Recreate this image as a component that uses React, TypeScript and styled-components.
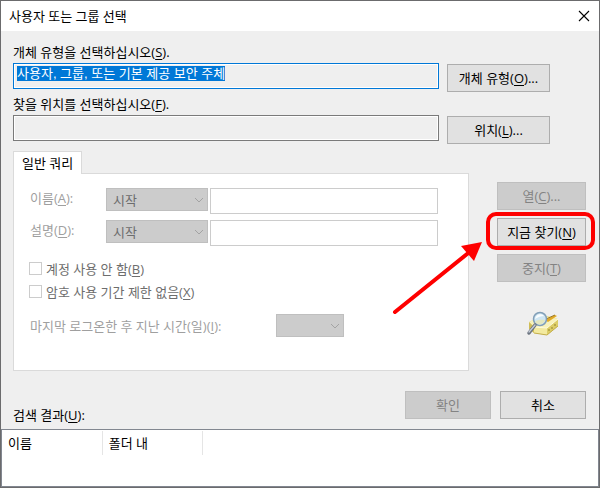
import React, { useEffect, useRef } from "react";
import styled, { createGlobalStyle, css } from "styled-components";

const GlobalStyle = createGlobalStyle`
  *, *::before, *::after { box-sizing: border-box; }
  body { margin: 0; background: #efefef; }
  body, button, input, select, textarea {
    font-family: "Open Sans", "Noto Sans CJK KR", sans-serif;
    font-size: 13px;
    line-height: 20px;
    color: #000;
  }
  u { text-underline-offset: 2px; }
`;

const Dialog = styled.main`
  display: flex;
  flex-direction: column;
  min-height: 100vh;
  border: 1px solid #6b6b6d;
  background: #efefef;
`;

const TitleBar = styled.header`
  display: flex;
  align-items: center;
  justify-content: space-between;
  height: 30px;
  padding: 0 8px;
  background: #fff;
`;

const Title = styled.h1`
  margin: 0;
  font-size: 13px;
  font-weight: 400;
`;

const CloseButton = styled.button`
  display: flex;
  padding: 1px;
  border: 0;
  background: none;
`;

const Scopes = styled.section`
  display: grid;
  gap: 2px;
  padding: 11px 49px 0 12px;
`;

const ScopeField = styled.div`
  display: grid;
  grid-template-columns: 1fr 103px;
  grid-template-rows: 20px 29px;
  column-gap: 8px;
  row-gap: 1px;
  align-items: end;
`;

const ScopeLabel = styled.label`
  grid-column: 1 / -1;
`;

const ScopeBox = styled.textarea<{ $active?: boolean }>`
  display: block;
  align-self: start;
  width: 100%;
  height: 26px;
  padding: 2px 3px;
  border: 1px solid ${(p) => (p.$active ? "#0078d7" : "#7a7a7a")};
  outline: 0;
  border-radius: 0;
  background: #efefef;
  box-shadow: inset 0 0 0 1px #fff;
  font-family: "Liberation Sans", "Noto Sans CJK KR", sans-serif;
  line-height: 15px;
  overflow: hidden;
  resize: none;
  white-space: nowrap;

  &::selection { background: #0078d7; color: #fff; }
`;

const Button = styled.button`
  display: block;
  width: 100%;
  height: 28px;
  padding: 0;
  border: 1px solid #adadad;
  border-radius: 0;
  background: #e1e1e1;
  text-align: center;

  &:disabled {
    border-color: #bfbfbf;
    background: #ccc;
    color: #838383;
  }
`;

const QueryArea = styled.section`
  display: grid;
  grid-template-columns: 1fr 89px;
  column-gap: 28px;
  padding: 7px 13px 0 12px;
`;

const TabList = styled.div`
  display: flex;
  margin-bottom: -1px;
`;

const Tab = styled.button`
  z-index: 1;
  height: 23px;
  padding: 0 8px;
  border: 1px solid #dadada;
  border-bottom: 0;
  background: #fff;
  line-height: 19px;
`;

const TabPanel = styled.div`
  padding: 14px 30px 33px 15px;
  border: 1px solid #dadada;
  background: #fff;
`;

const Criteria = styled.div`
  display: grid;
  grid-template-columns: 75px 102px 1fr;
  gap: 6px 2px;
`;

const MutedLabel = styled.label`
  padding-left: 1px;
  color: #9f9f9f;
`;

const SelectFrame = styled.div`
  position: relative;
  height: 23px;
`;

const Select = styled.select`
  appearance: none;
  display: block;
  width: 100%;
  height: 23px;
  padding: 0 6px;
  border: 1px solid #bfbfbf;
  border-radius: 0;
  background: #ccc;

  &:disabled { color: #6d6d6d; opacity: 1; }
`;

const Chevron = styled.svg`
  position: absolute;
  top: 9px;
  right: 4px;
  pointer-events: none;
`;

const TextBox = styled.input`
  width: 100%;
  min-width: 0;
  height: 26px;
  padding: 0 4px;
  border: 1px solid #ccc;
  background: #fff;
`;

const CheckList = styled.div`
  display: grid;
  gap: 6px;
  margin: 14px 0;
`;

const CheckLabel = styled.label`
  display: flex;
  align-items: center;
  gap: 4px;
  height: 17px;
  color: #6d6d6d;
`;

const CheckBox = styled.input`
  appearance: none;
  width: 13px;
  height: 13px;
  margin: 0;
  border: 1px solid #ccc;
  background: #fff;
`;

const LogonRow = styled.div`
  display: grid;
  grid-template-columns: 245px 68px;
  column-gap: 2px;
  align-items: center;
`;

const Actions = styled.div`
  display: flex;
  flex-direction: column;
  gap: 8px;
  padding-top: 31px;
`;

const Highlighted = styled.div`
  position: relative;
`;

const callout = css`
  position: absolute;
  z-index: 2;
  pointer-events: none;
`;

const Ring = styled.span`
  ${callout}
  inset: -6px -9px -4px -11px;
  border: 4px solid #fe0000;
  border-radius: 10px;
`;

const Arrow = styled.svg`
  ${callout}
  top: 18px;
  left: -107px;
`;

const SearchArt = styled.svg`
  align-self: center;
  margin-top: 20px;
`;

const Footer = styled.section`
  display: flex;
  justify-content: space-between;
  min-height: 34px;
  margin: 20px 13px 4px 12px;
`;

const ResultsLabel = styled.h2`
  align-self: flex-end;
  margin: 0;
  font-size: 13px;
  font-weight: 400;
`;

const Decisions = styled.div`
  display: grid;
  grid-template-columns: 86px 86px;
  gap: 9px;
`;

const Results = styled.section`
  flex: 1;
  min-height: 56px;
  padding-top: 1px;
  border: 1px solid #828790;
  background: #fff;
`;

const ResultTable = styled.table`
  border-collapse: collapse;
  table-layout: fixed;
  width: 201px;
`;

const HeaderCell = styled.th`
  width: 100px;
  height: 24px;
  padding: 0 6px;
  border-right: 1px solid #e5e5e5;
  font-weight: 400;
  text-align: left;
`;

function Dropdown({ id, options, label }: { id: string; options: string[]; label?: string }) {
  return (
    <SelectFrame>
      <Select id={id} aria-label={label} disabled>
        {options.map((o) => (
          <option key={o}>{o}</option>
        ))}
      </Select>
      <Chevron width="10" height="7" viewBox="0 0 10 7" fill="none" stroke="#a3a3a3">
        <path d="M1 1l4 4 4-4" />
      </Chevron>
    </SelectFrame>
  );
}

function SearchIcon() {
  return (
    <SearchArt width="34" height="28" viewBox="0 0 34 28" aria-hidden="true">
      <path d="M4 12l8-4 10-2 11 3v7L22 25 9 23l-5-5z" fill="#e9dd83" />
      <path d="M4 12l14-6 15 3-11 9-13-1z" fill="#f8f2bb" />
      <path d="M4 12l5 5v6l-5-4z" fill="#cfbd58" />
      <path d="M9 17l13 1v7L9 23z" fill="#f3ea9f" />
      <path d="M22 18L33 9v7L22 25z" fill="#dccd66" />
      <path d="M9 17l13 1L33 9" fill="none" stroke="#fffce0" />
      <path d="M9 23l13 2 11-9" fill="none" stroke="#c3ae4c" />
      <path d="M24 19v2m3-4v2m3-5v2" stroke="#93822f" />
      <path d="M20 10l10-5 2 1-9 6z" fill="#e2aa25" />
      <path d="M21 9l9-4" stroke="#99751f" />
      <circle cx="15" cy="9" r="6.500" fill="#cfe6f3" stroke="#829fb7" strokeWidth="1.500" />
      <path d="M10 9c1-5 6-6 9-3-3 0-6 1-9 3z" fill="#f9fdff" />
      <path d="M10 12c3-3 7-2 10-2-1 5-8 6-10 2z" fill="#e3e7c0" />
      <path d="M10 15l-6 8" stroke="#6c7480" strokeWidth="3.500" strokeLinecap="round" />
      <path d="M10 15l-6 7" stroke="#c6cdd7" strokeWidth="1.300" strokeLinecap="round" />
    </SearchArt>
  );
}

export default function App() {
  const typeBox = useRef<HTMLTextAreaElement>(null);

  useEffect(() => {
    typeBox.current?.focus();
    typeBox.current?.select();
  }, []);

  return (
    <>
      <GlobalStyle />
      <Dialog>
        <TitleBar>
          <Title>사용자 또는 그룹 선택</Title>
          <CloseButton aria-label="닫기">
            <svg width="12" height="12" viewBox="0 0 12 12" stroke="#000" strokeWidth="1.100">
              <path d="M1 1l10 10M11 1L1 11" />
            </svg>
          </CloseButton>
        </TitleBar>

        <Scopes>
          <ScopeField>
            <ScopeLabel htmlFor="types">
              개체 유형을 선택하십시오(<u>S</u>).
            </ScopeLabel>
            <ScopeBox
              id="types"
              ref={typeBox}
              rows={1}
              readOnly
              spellCheck={false}
              $active
              defaultValue="사용자, 그룹, 또는 기본 제공 보안 주체"
            />
            <Button>
              개체 유형(<u>O</u>)...
            </Button>
          </ScopeField>
          <ScopeField>
            <ScopeLabel htmlFor="place">
              찾을 위치를 선택하십시오(<u>F</u>).
            </ScopeLabel>
            <ScopeBox id="place" rows={1} readOnly />
            <Button>
              위치(<u>L</u>)...
            </Button>
          </ScopeField>
        </Scopes>

        <QueryArea>
          <div>
            <TabList role="tablist">
              <Tab role="tab" aria-selected="true">
                일반 쿼리
              </Tab>
            </TabList>
            <TabPanel role="tabpanel">
              <Criteria>
                <MutedLabel htmlFor="name">
                  이름(<u>A</u>):
                </MutedLabel>
                <Dropdown id="name-match" label="이름 조건" options={["시작"]} />
                <TextBox id="name" disabled />
                <MutedLabel htmlFor="description">
                  설명(<u>D</u>):
                </MutedLabel>
                <Dropdown id="description-match" label="설명 조건" options={["시작"]} />
                <TextBox id="description" disabled />
              </Criteria>
              <CheckList>
                <CheckLabel>
                  <CheckBox type="checkbox" disabled />
                  <span>
                    계정 사용 안 함(<u>B</u>)
                  </span>
                </CheckLabel>
                <CheckLabel>
                  <CheckBox type="checkbox" disabled />
                  <span>
                    암호 사용 기간 제한 없음(<u>X</u>)
                  </span>
                </CheckLabel>
              </CheckList>
              <LogonRow>
                <MutedLabel htmlFor="logon">
                  마지막 로그온한 후 지난 시간(일)(<u>I</u>):
                </MutedLabel>
                <Dropdown id="logon" options={[]} />
              </LogonRow>
            </TabPanel>
          </div>

          <Actions>
            <Button disabled>
              열(<u>C</u>)...
            </Button>
            <Highlighted>
              <Button>
                지금 찾기(<u>N</u>)
              </Button>
              <Ring />
              <Arrow width="96" height="80" viewBox="0 0 96 80" aria-hidden="true">
                <path d="M5 76L82 14" stroke="#fe0000" strokeWidth="4" strokeLinecap="round" />
                <path d="M92 6L71 10l13 15z" fill="#fe0000" />
              </Arrow>
            </Highlighted>
            <Button disabled>
              중지(<u>T</u>)
            </Button>
            <SearchIcon />
          </Actions>
        </QueryArea>

        <Footer>
          <ResultsLabel id="results">
            검색 결과(<u>U</u>):
          </ResultsLabel>
          <Decisions>
            <Button disabled>확인</Button>
            <Button>취소</Button>
          </Decisions>
        </Footer>

        <Results>
          <ResultTable aria-labelledby="results">
            <thead>
              <tr>
                <HeaderCell scope="col">이름</HeaderCell>
                <HeaderCell scope="col">폴더 내</HeaderCell>
              </tr>
            </thead>
          </ResultTable>
        </Results>
      </Dialog>
    </>
  );
}
